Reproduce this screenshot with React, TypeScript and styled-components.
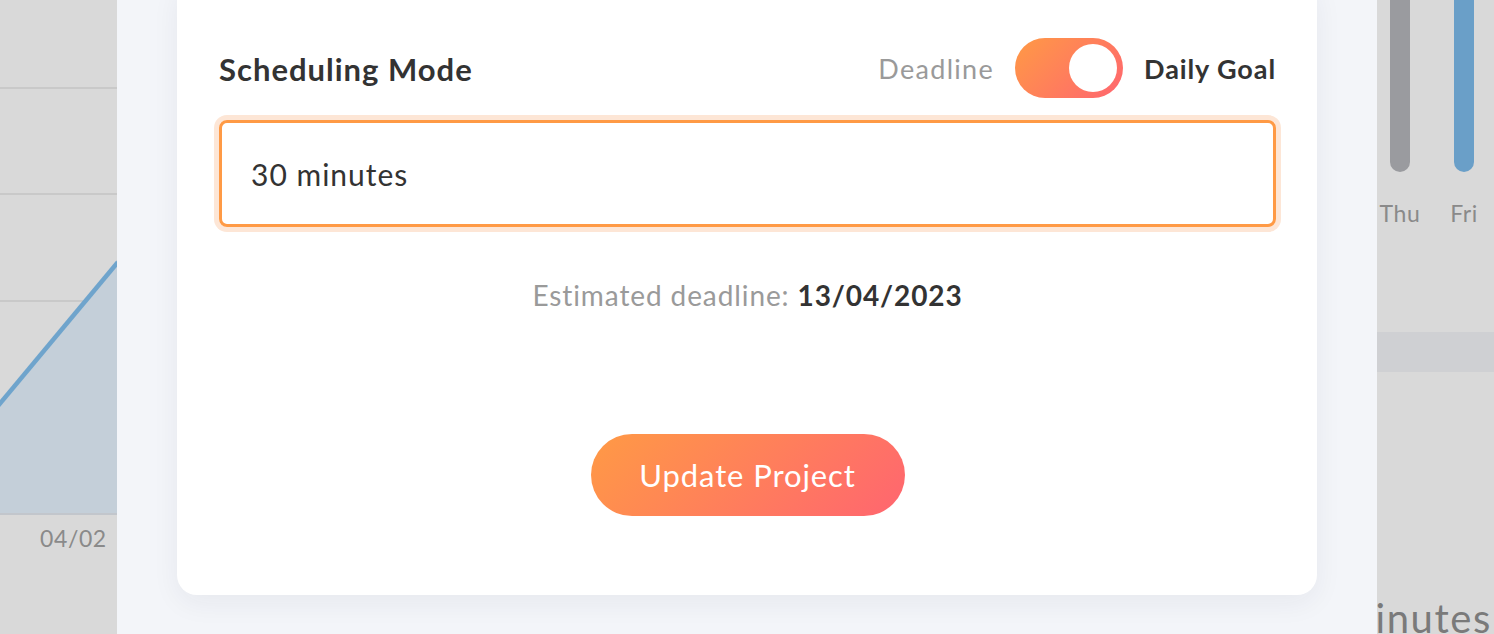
import styled, { createGlobalStyle } from "styled-components";

/* ── GLOBAL ── */

const GlobalStyle = createGlobalStyle`
  html, body {
    margin: 0;
    padding: 0;
    overflow: hidden;
    background: #d9d9d9;
  }

  * {
    box-sizing: border-box;
  }
`;

const FONT = `"Lato", "Open Sans", sans-serif`;
const BRAND_GRADIENT = "linear-gradient(135deg, #ff9a45 0%, #ff6570 100%)";

/* ── PAGE SHELL ── */

const Page = styled.div`
  display: flex;
  width: 1494px;
  height: 634px;
  overflow: hidden;
  font-family: ${FONT};
`;

/* ── DIMMED DASHBOARD (behind the modal) ── */

const LeftStrip = styled.div`
  width: 117px;
  flex-shrink: 0;
  display: flex;
  flex-direction: column;
  overflow: hidden;
`;

const AxisLabel = styled.div<{ $pl?: number; $pt?: number }>`
  font-family: ${FONT};
  font-size: 23px;
  letter-spacing: 0.6px;
  color: #8a8a8a;
  padding-left: ${(p) => p.$pl ?? 0}px;
  padding-top: ${(p) => p.$pt ?? 0}px;
  line-height: 26px;
`;

const RightStrip = styled.div`
  width: 117px;
  flex-shrink: 0;
  display: flex;
  flex-direction: column;
  overflow: hidden;
`;

const BarRow = styled.div`
  display: flex;
  gap: 24px;
  padding-left: 3px;
`;

const BarColumn = styled.div`
  width: 40px;
  display: flex;
  flex-direction: column;
  align-items: center;
  gap: 28px;
`;

const Bar = styled.div<{ $color: string }>`
  width: 20px;
  height: 172px;
  border-radius: 0 0 10px 10px;
  background: ${(p) => p.$color};
`;

const Band = styled.div`
  margin-top: 106px;
  height: 40px;
  background: #cfd0d3;
`;

const BigUnit = styled.div`
  margin-top: auto;
  display: flex;
  justify-content: flex-end;
  padding-right: 2px;
  font-family: ${FONT};
  font-size: 40px;
  line-height: 40px;
  letter-spacing: 1.6px;
  color: #7a7a7a;
  white-space: nowrap;
  transform: translateY(4px);
`;

/* ── MODAL ── */

const ModalPanel = styled.div`
  flex: 1;
  background: #f3f5f9;
  padding: 0 60px 39px;
  display: flex;
  flex-direction: column;
`;

const Card = styled.div`
  margin-top: -20px;
  flex: 1;
  background: #ffffff;
  border-radius: 20px;
  box-shadow: 0 8px 28px rgba(30, 40, 70, 0.06);
  padding: 58px 41px 79px 42px;
  display: flex;
  flex-direction: column;
`;

const ModeRow = styled.div`
  display: flex;
  align-items: center;
  justify-content: space-between;
  height: 60px;
`;

const SectionTitle = styled.h3`
  margin: 0;
  font-family: ${FONT};
  font-size: 31px;
  font-weight: 700;
  color: #333333;
  letter-spacing: 1px;
  transform: translateY(1px);
`;

const ToggleGroup = styled.div`
  display: flex;
  align-items: center;
  gap: 21px;
`;

const ToggleLabel = styled.span<{ $active?: boolean }>`
  font-family: ${FONT};
  font-size: 27px;
  letter-spacing: ${(p) => (p.$active ? 0.9 : 1.3)}px;
  font-weight: ${(p) => (p.$active ? 700 : 400)};
  color: ${(p) => (p.$active ? "#333333" : "#9a9a9a")};
`;

const Switch = styled.div<{ $on: boolean }>`
  width: 108px;
  height: 60px;
  border-radius: 30px;
  background: ${BRAND_GRADIENT};
  display: flex;
  align-items: center;
  justify-content: ${(p) => (p.$on ? "flex-end" : "flex-start")};
  padding: 0 6px;
`;

const Knob = styled.div`
  width: 48px;
  height: 48px;
  border-radius: 50%;
  background: #ffffff;
`;

const GoalInput = styled.div`
  margin-top: 22px;
  height: 107px;
  border: 3px solid #ff9a45;
  border-radius: 8px;
  box-shadow: 0 0 0 5px #fde6d6;
  display: flex;
  align-items: center;
  padding-left: 29px;
  font-family: ${FONT};
  font-size: 30px;
  letter-spacing: 1px;
  color: #333333;
`;

const Estimate = styled.div`
  margin-top: 52px;
  text-align: center;
  font-family: ${FONT};
  font-size: 28px;
  letter-spacing: 0.9px;
  line-height: 32px;
  color: #9a9a9a;

  strong {
    color: #333333;
    font-weight: 700;
  }
`;

const PrimaryButton = styled.button`
  align-self: center;
  margin-top: auto;
  width: 314px;
  height: 82px;
  border: none;
  border-radius: 41px;
  background: ${BRAND_GRADIENT};
  color: #ffffff;
  font-family: ${FONT};
  font-size: 31px;
  letter-spacing: 0.9px;
  cursor: pointer;
`;

/* ── COMPONENT ── */

function LineChart() {
  return (
    <svg width="117" height="516" viewBox="0 0 117 516">
      {[88, 194, 301, 408].map((y) => (
        <line key={y} x1="0" x2="117" y1={y} y2={y} stroke="#c9c9c9" strokeWidth="2" />
      ))}
      <polygon points="0,405 117,263 117,515 0,515" fill="#c4cfd9" />
      <line x1="0" x2="117" y1="514" y2="514" stroke="#c2c6cc" strokeWidth="2" />
      <line x1="-2" y1="406" x2="118" y2="262" stroke="#6fa4cc" strokeWidth="4.5" />
    </svg>
  );
}

export default function App() {
  return (
    <>
      <GlobalStyle />
      <Page>
        <LeftStrip>
          <LineChart />
          <AxisLabel $pl={40} $pt={9}>04/02</AxisLabel>
        </LeftStrip>

        <ModalPanel>
          <Card>
            <ModeRow>
              <SectionTitle>Scheduling Mode</SectionTitle>
              <ToggleGroup>
                <ToggleLabel>Deadline</ToggleLabel>
                <Switch $on>
                  <Knob />
                </Switch>
                <ToggleLabel $active>Daily Goal</ToggleLabel>
              </ToggleGroup>
            </ModeRow>

            <GoalInput>30 minutes</GoalInput>

            <Estimate>
              Estimated deadline: <strong>13/04/2023</strong>
            </Estimate>

            <PrimaryButton>Update Project</PrimaryButton>
          </Card>
        </ModalPanel>

        <RightStrip>
          <BarRow>
            <BarColumn>
              <Bar $color="#9a9b9f" />
              <AxisLabel>Thu</AxisLabel>
            </BarColumn>
            <BarColumn>
              <Bar $color="#6a9fc8" />
              <AxisLabel>Fri</AxisLabel>
            </BarColumn>
          </BarRow>
          <Band />
          <BigUnit>minutes</BigUnit>
        </RightStrip>
      </Page>
    </>
  );
}
